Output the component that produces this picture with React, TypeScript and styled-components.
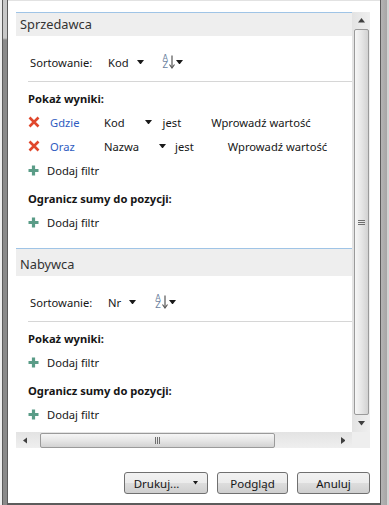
import React from "react";
import styled, { createGlobalStyle } from "styled-components";

const Global = createGlobalStyle`
  html, body { margin: 0; padding: 0; background: #ffffff; }
  body { font-family: "Noto Sans", "Open Sans", sans-serif; font-size: 11.2px; color: #161616; }
  * { box-sizing: border-box; }
`;

const Window = styled.div`
  width: 389px;
  height: 505px;
  display: flex;
  overflow: hidden;
  background: #ffffff;
`;

const LeftStrip = styled.div`
  width: 8px;
  flex: none;
  border-left: 2px solid #eeeeee;
  background: linear-gradient(to bottom, #c9c9c9 0, #c9c9c9 38px, #8a8a8a 40px, #8a8a8a 100%);
  box-shadow: inset 1px 0 0 #5c5c5c, inset -1px 0 0 #5c5c5c;
`;

const RightStrip = styled.div`
  width: 9px;
  flex: none;
  background: linear-gradient(to right, #5a5a5a 0, #5a5a5a 1px, #b4b4b4 1px, #a6a6a6 7px, #d4d4d4 7px);
`;

const Main = styled.div`
  flex: 1;
  display: flex;
  flex-direction: column;
  border-bottom: 2px solid #5c5c5c;
  border-top: 1px solid #e2e2e2;
`;

const ScrollViewer = styled.div`
  margin: 11px 10px 0 8px;
  height: 436px;
  display: grid;
  grid-template-columns: 1fr 18px;
  grid-template-rows: 1fr 16px;
`;

const Content = styled.div`
  overflow: hidden;
  min-width: 0;
`;

const Section = styled.section`
  padding-bottom: 14px;
`;

const SectionHeader = styled.div<{ $extra: number }>`
  height: ${(p) => 24 + p.$extra}px;
  border-top: 1px solid #9fc4e6;
  background: #eeeeee;
  padding-left: 4px;
  padding-top: ${(p) => p.$extra}px;
  font-size: 12.8px;
  line-height: 23px;
  color: #333333;
`;

const Body = styled.div`
  padding-left: 12px;
`;

const SortRow = styled.div`
  margin-top: 14px;
  height: 24px;
  display: flex;
  align-items: center;
  padding-left: 2px;
`;

const SortLabel = styled.span`
  width: 78px;
  flex: none;
`;

const Combo = styled.span<{ $gap: number }>`
  display: inline-flex;
  align-items: center;
  gap: ${(p) => p.$gap}px;
  white-space: nowrap;
`;

const Separator = styled.div`
  margin-top: 7px;
  height: 1px;
  background: #d6d6d6;
`;

const GroupLabel = styled.div`
  margin-top: 6px;
  height: 22px;
  line-height: 22px;
  font-weight: bold;
`;

const Row = styled.div`
  height: 24px;
  display: flex;
  align-items: center;
  white-space: nowrap;
`;

const IconBox = styled.span<{ $w: number }>`
  width: ${(p) => p.$w}px;
  flex: none;
  display: inline-flex;
  align-items: center;
`;

const Connector = styled.span`
  width: 54px;
  flex: none;
  color: #2f5cbf;
`;

const Operator = styled.span<{ $ml: number }>`
  margin-left: ${(p) => p.$ml}px;
`;

const Value = styled.span<{ $ml: number }>`
  margin-left: ${(p) => p.$ml}px;
`;

const SortIconWrap = styled.span`
  margin-left: 19px;
  display: inline-flex;
  align-items: center;
  gap: 1px;
`;

const AZ = styled.span`
  display: inline-flex;
  flex-direction: column;
  font-size: 8px;
  line-height: 7.5px;
  color: #6b7f9e;
  font-family: "DejaVu Sans", sans-serif;
`;

/* scrollbars */
const VScroll = styled.div`
  background: linear-gradient(to right, #e3e3e3, #efefef);
  display: flex;
  flex-direction: column;
  align-items: center;
`;

const ArrowCell = styled.div<{ $w: number; $h: number }>`
  width: ${(p) => p.$w}px;
  height: ${(p) => p.$h}px;
  flex: none;
  display: flex;
  align-items: center;
  justify-content: center;
`;

const VThumb = styled.div`
  flex: 1;
  width: 15px;
  border: 1px solid #9a9a9a;
  border-radius: 2px;
  background: linear-gradient(to right, #f6f6f6 0, #e6e6e6 50%, #d2d2d2 100%);
  display: flex;
  align-items: center;
  justify-content: center;
`;

const HScroll = styled.div`
  background: linear-gradient(to bottom, #e3e3e3, #efefef);
  display: flex;
  align-items: center;
`;

const HThumb = styled.div`
  width: 235px;
  height: 15px;
  margin-left: 6px;
  border: 1px solid #9a9a9a;
  border-radius: 2px;
  background: linear-gradient(to bottom, #f6f6f6 0, #e6e6e6 50%, #d2d2d2 100%);
  display: flex;
  align-items: center;
  justify-content: center;
`;

const HTrack = styled.div`
  flex: 1;
`;

const Corner = styled.div`
  background: #eeeeee;
`;

const ButtonRow = styled.div`
  margin-top: 24px;
  padding-right: 10px;
  display: flex;
  justify-content: flex-end;
  gap: 9px;
`;

const Button = styled.button<{ $w: number }>`
  width: ${(p) => p.$w}px;
  height: 22px;
  border: 1px solid #707070;
  border-radius: 3px;
  background: linear-gradient(to bottom, #f2f2f2 0, #ebebeb 50%, #dddddd 51%, #cfcfcf 100%);
  font-family: inherit;
  font-size: 11.5px;
  color: #161616;
  display: flex;
  align-items: center;
  justify-content: center;
  gap: 14px;
  padding: 0;
`;

const Triangle = ({ dir = "down", size = 7, color = "#1a1a1a" }: { dir?: string; size?: number; color?: string }) => {
  const h = Math.ceil(size / 2) + 0.5;
  const pts: Record<string, string> = {
    down: `0,0 ${size},0 ${size / 2},${h}`,
    up: `0,${h} ${size},${h} ${size / 2},0`,
  };
  if (dir === "left" || dir === "right") {
    const p = dir === "left" ? `${h},0 ${h},${size} 0,${size / 2}` : `0,0 0,${size} ${h},${size / 2}`;
    return (
      <svg width={h} height={size} style={{ display: "block" }}>
        <polygon points={p} fill={color} />
      </svg>
    );
  }
  return (
    <svg width={size} height={h} style={{ display: "block" }}>
      <polygon points={pts[dir]} fill={color} />
    </svg>
  );
};

const RedX = () => (
  <svg width="12" height="12" viewBox="0 0 12 12" style={{ display: "block" }}>
    <path d="M1.5 1.5 L10.5 10.5 M10.5 1.5 L1.5 10.5" stroke="#e0472c" strokeWidth="2.6" />
  </svg>
);

const Plus = () => (
  <svg width="11" height="11" viewBox="0 0 11 11" style={{ display: "block" }}>
    <path d="M5.5 0.5 V10.5 M0.5 5.5 H10.5" stroke="#5a9c87" strokeWidth="3.2" />
  </svg>
);

const SortIcon = () => (
  <SortIconWrap>
    <AZ>
      <span>A</span>
      <span>Z</span>
    </AZ>
    <svg width="6" height="14" viewBox="0 0 6 14" style={{ display: "block" }}>
      <path d="M3 0.5 V12" stroke="#555" strokeWidth="1.2" />
      <path d="M0.5 9.5 L3 13 L5.5 9.5" stroke="#555" strokeWidth="1.1" fill="none" />
    </svg>
    <Triangle />
  </SortIconWrap>
);

const Grip = ({ vertical }: { vertical: boolean }) =>
  vertical ? (
    <svg width="7" height="7" style={{ display: "block" }}>
      <path d="M0 1.5 H7 M0 3.5 H7 M0 5.5 H7" stroke="#6f6f6f" strokeWidth="1" />
    </svg>
  ) : (
    <svg width="7" height="7" style={{ display: "block" }}>
      <path d="M1.5 0 V7 M3.5 0 V7 M5.5 0 V7" stroke="#6f6f6f" strokeWidth="1" />
    </svg>
  );

type Filter = { connector: string; field: string; opGap: number; valGap: number };

const AddFilter = () => (
  <Row>
    <IconBox $w={19}>
      <Plus />
    </IconBox>
    Dodaj filtr
  </Row>
);

const FilterSection = ({
  title,
  sortBy,
  filters,
  extra,
}: {
  title: string;
  sortBy: string;
  filters: Filter[];
  extra: number;
}) => (
  <Section>
    <SectionHeader $extra={extra}>{title}</SectionHeader>
    <Body>
      <SortRow>
        <SortLabel>Sortowanie:</SortLabel>
        <Combo $gap={8}>
          {sortBy}
          <Triangle />
        </Combo>
        <SortIcon />
      </SortRow>
      <Separator />
      <GroupLabel>Pokaż wyniki:</GroupLabel>
      {filters.map((f) => (
        <Row key={f.connector}>
          <IconBox $w={22}>
            <RedX />
          </IconBox>
          <Connector>{f.connector}</Connector>
          <Combo $gap={20}>
            {f.field}
            <Triangle />
          </Combo>
          <Operator $ml={f.opGap}>jest</Operator>
          <Value $ml={f.valGap}>Wprowadź wartość</Value>
        </Row>
      ))}
      <AddFilter />
      <GroupLabel>Ogranicz sumy do pozycji:</GroupLabel>
      <AddFilter />
    </Body>
  </Section>
);

export default function App() {
  return (
    <>
      <Global />
      <Window>
        <LeftStrip />
        <Main>
          <ScrollViewer>
            <Content>
              <FilterSection
                title="Sprzedawca"
                sortBy="Kod"
                extra={0}
                filters={[
                  { connector: "Gdzie", field: "Kod", opGap: 11, valGap: 30 },
                  { connector: "Oraz", field: "Nazwa", opGap: 9, valGap: 34 },
                ]}
              />
              <FilterSection title="Nabywca" sortBy="Nr" extra={4} filters={[]} />
            </Content>
            <VScroll>
              <ArrowCell $w={18} $h={17}>
                <Triangle dir="up" size={7} color="#404040" />
              </ArrowCell>
              <VThumb>
                <Grip vertical />
              </VThumb>
              <ArrowCell $w={18} $h={17}>
                <Triangle dir="down" size={7} color="#404040" />
              </ArrowCell>
            </VScroll>
            <HScroll>
              <ArrowCell $w={18} $h={16}>
                <Triangle dir="left" size={7} color="#404040" />
              </ArrowCell>
              <HThumb>
                <Grip vertical={false} />
              </HThumb>
              <HTrack />
              <ArrowCell $w={18} $h={16}>
                <Triangle dir="right" size={7} color="#404040" />
              </ArrowCell>
            </HScroll>
            <Corner />
          </ScrollViewer>
          <ButtonRow>
            <Button $w={84}>
              <span>Drukuj...</span>
              <Triangle size={5} />
            </Button>
            <Button $w={71}>Podgląd</Button>
            <Button $w={73}>Anuluj</Button>
          </ButtonRow>
        </Main>
        <RightStrip />
      </Window>
    </>
  );
}
